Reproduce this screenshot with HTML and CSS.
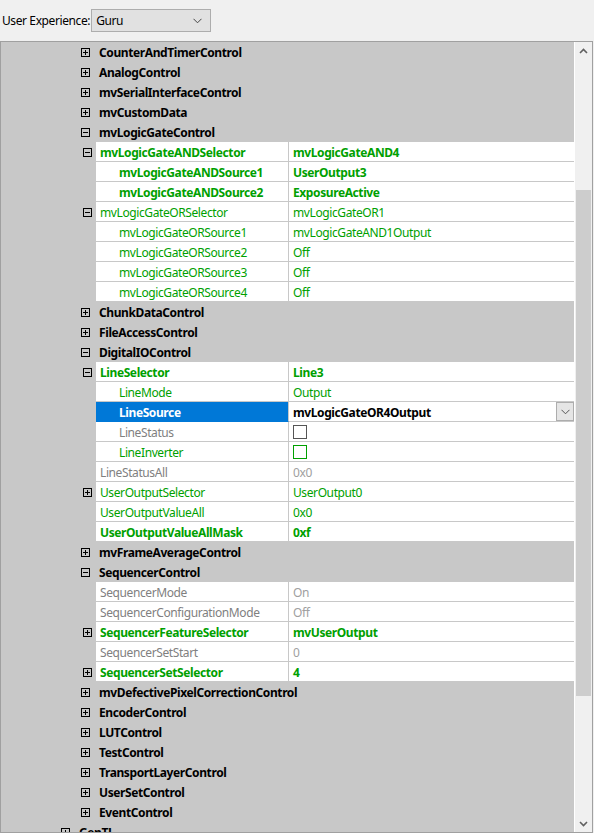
FILE: index.html
```html
<!DOCTYPE html>
<html lang="en">
<head>
    <meta charset="UTF-8">
    <meta name="viewport" content="width=device-width, initial-scale=1.0">
    <title>Property Grid</title>
    <link rel="stylesheet" href="styles.css">
</head>
<body>
    <div class="toolbar">
        <span class="toolbar-label">User Experience:</span>
        <div class="combo">
            <span>Guru</span>
            <svg class="combo-arrow" width="9" height="6" viewBox="0 0 9 6"><path d="M0.5 0.8 L4.5 4.8 L8.5 0.8" fill="none" stroke="#444" stroke-width="1"/></svg>
        </div>
    </div>

    <div class="tree-panel">
        <div class="tree">
            <div class="row group"><span class="exp plus"></span><span class="label">CounterAndTimerControl</span></div>
            <div class="row group"><span class="exp plus"></span><span class="label">AnalogControl</span></div>
            <div class="row group"><span class="exp plus"></span><span class="label">mvSerialInterfaceControl</span></div>
            <div class="row group"><span class="exp plus"></span><span class="label">mvCustomData</span></div>
            <div class="row group"><span class="exp"></span><span class="label">mvLogicGateControl</span></div>

            <div class="row prop green strong"><div class="gutter"><span class="exp"></span></div><div class="name">mvLogicGateANDSelector</div><div class="value">mvLogicGateAND4</div></div>
            <div class="row prop green strong"><div class="gutter"></div><div class="name sub">mvLogicGateANDSource1</div><div class="value">UserOutput3</div></div>
            <div class="row prop green strong"><div class="gutter"></div><div class="name sub">mvLogicGateANDSource2</div><div class="value">ExposureActive</div></div>
            <div class="row prop green"><div class="gutter"><span class="exp"></span></div><div class="name">mvLogicGateORSelector</div><div class="value">mvLogicGateOR1</div></div>
            <div class="row prop green"><div class="gutter"></div><div class="name sub">mvLogicGateORSource1</div><div class="value">mvLogicGateAND1Output</div></div>
            <div class="row prop green"><div class="gutter"></div><div class="name sub">mvLogicGateORSource2</div><div class="value">Off</div></div>
            <div class="row prop green"><div class="gutter"></div><div class="name sub">mvLogicGateORSource3</div><div class="value">Off</div></div>
            <div class="row prop green"><div class="gutter"></div><div class="name sub">mvLogicGateORSource4</div><div class="value">Off</div></div>

            <div class="row group"><span class="exp plus"></span><span class="label">ChunkDataControl</span></div>
            <div class="row group"><span class="exp plus"></span><span class="label">FileAccessControl</span></div>
            <div class="row group"><span class="exp"></span><span class="label">DigitalIOControl</span></div>

            <div class="row prop green strong"><div class="gutter"><span class="exp"></span></div><div class="name">LineSelector</div><div class="value">Line3</div></div>
            <div class="row prop green"><div class="gutter"></div><div class="name sub">LineMode</div><div class="value">Output</div></div>
            <div class="row prop selected"><div class="gutter"></div><div class="name sub">LineSource</div><div class="value">mvLogicGateOR4Output<span class="drop-btn"><svg width="9" height="6" viewBox="0 0 9 6"><path d="M0.5 0.8 L4.5 4.8 L8.5 0.8" fill="none" stroke="#555" stroke-width="1"/></svg></span></div></div>
            <div class="row prop readonly"><div class="gutter"></div><div class="name sub">LineStatus</div><div class="value"><span class="check"></span></div></div>
            <div class="row prop green"><div class="gutter"></div><div class="name sub">LineInverter</div><div class="value"><span class="check check-green"></span></div></div>
            <div class="row prop readonly"><div class="gutter"></div><div class="name">LineStatusAll</div><div class="value">0x0</div></div>
            <div class="row prop green"><div class="gutter"><span class="exp plus"></span></div><div class="name">UserOutputSelector</div><div class="value">UserOutput0</div></div>
            <div class="row prop green"><div class="gutter"></div><div class="name">UserOutputValueAll</div><div class="value">0x0</div></div>
            <div class="row prop green strong"><div class="gutter"></div><div class="name">UserOutputValueAllMask</div><div class="value">0xf</div></div>

            <div class="row group"><span class="exp plus"></span><span class="label">mvFrameAverageControl</span></div>
            <div class="row group"><span class="exp"></span><span class="label">SequencerControl</span></div>

            <div class="row prop readonly"><div class="gutter"></div><div class="name">SequencerMode</div><div class="value">On</div></div>
            <div class="row prop readonly"><div class="gutter"></div><div class="name">SequencerConfigurationMode</div><div class="value">Off</div></div>
            <div class="row prop green strong"><div class="gutter"><span class="exp plus"></span></div><div class="name">SequencerFeatureSelector</div><div class="value">mvUserOutput</div></div>
            <div class="row prop readonly"><div class="gutter"></div><div class="name">SequencerSetStart</div><div class="value">0</div></div>
            <div class="row prop green strong"><div class="gutter"><span class="exp plus"></span></div><div class="name">SequencerSetSelector</div><div class="value">4</div></div>

            <div class="row group"><span class="exp plus"></span><span class="label">mvDefectivePixelCorrectionControl</span></div>
            <div class="row group"><span class="exp plus"></span><span class="label">EncoderControl</span></div>
            <div class="row group"><span class="exp plus"></span><span class="label">LUTControl</span></div>
            <div class="row group"><span class="exp plus"></span><span class="label">TestControl</span></div>
            <div class="row group"><span class="exp plus"></span><span class="label">TransportLayerControl</span></div>
            <div class="row group"><span class="exp plus"></span><span class="label">UserSetControl</span></div>
            <div class="row group"><span class="exp plus"></span><span class="label">EventControl</span></div>
            <div class="row group top-level"><span class="exp plus"></span><span class="label">GenTL</span></div>
        </div>

        <div class="scrollbar">
            <div class="scroll-btn"><svg width="9" height="6" viewBox="0 0 9 6"><path d="M1 5 L4.5 1.5 L8 5" fill="none" stroke="#606060" stroke-width="1.6"/></svg></div>
            <div class="scroll-track"><div class="scroll-thumb"></div></div>
            <div class="scroll-btn"><svg width="9" height="6" viewBox="0 0 9 6"><path d="M1 1 L4.5 4.5 L8 1" fill="none" stroke="#606060" stroke-width="1.6"/></svg></div>
        </div>
    </div>
</body>
</html>
```

FILE: styles.css
```css
body {
    font-family: "Noto Sans", "Open Sans", Arial, sans-serif;
    font-size: 12px;
    letter-spacing: -0.4px;
    margin: 0;
    padding: 0;
    background: #f0f0f0;
    color: #000;
    width: 594px;
    height: 833px;
    overflow: hidden;
}
.toolbar {
    height: 41px;
    display: flex;
    align-items: center;
    padding-left: 2px;
    box-sizing: border-box;
}
.toolbar-label {
    margin-right: 1px;
}
.combo {
    width: 120px;
    height: 23px;
    box-sizing: border-box;
    border: 1px solid #adadad;
    background: #e1e1e1;
    display: flex;
    align-items: center;
    justify-content: space-between;
    padding: 0 8px 0 4px;
}
.tree-panel {
    width: 593px;
    height: 792px;
    box-sizing: border-box;
    border: 1px solid #a0a0a0;
    display: flex;
    background: #c8c8c8;
}
.tree {
    width: 573px;
    overflow: hidden;
}
.row {
    height: 20px;
    display: flex;
    align-items: center;
    box-sizing: border-box;
    white-space: nowrap;
}
.group {
    padding-left: 80px;
    font-weight: bold;
}
.group.top-level {
    padding-left: 60px;
}
.group .label {
    margin-left: 9px;
}
.exp {
    width: 9px;
    height: 9px;
    box-sizing: border-box;
    border: 1px solid #000;
    position: relative;
    flex: none;
}
.exp::before {
    content: "";
    position: absolute;
    left: 1px;
    right: 1px;
    top: 3px;
    height: 1px;
    background: #000;
}
.exp.plus::after {
    content: "";
    position: absolute;
    top: 1px;
    bottom: 1px;
    left: 3px;
    width: 1px;
    background: #000;
}
.prop {
    align-items: stretch;
}
.gutter {
    width: 95px;
    padding-left: 82px;
    box-sizing: border-box;
    display: flex;
    align-items: center;
    flex: none;
}
.name,
.value {
    background: #fff;
    border-bottom: 1px solid #c8c8c8;
    display: flex;
    align-items: center;
    box-sizing: border-box;
    padding-top: 1px;
}
.name {
    width: 193px;
    border-right: 1px solid #c8c8c8;
    padding-left: 4px;
    flex: none;
}
.name.sub {
    padding-left: 23px;
}
.value {
    flex: 1;
    padding-left: 4px;
}
.green .name,
.green .value {
    color: #00a000;
}
.strong .name,
.strong .value {
    font-weight: bold;
}
.readonly .name {
    color: #808080;
}
.readonly .value {
    color: #a0a0a0;
}
.selected .name {
    background: #0078d7;
    color: #fff;
    font-weight: bold;
    border-bottom-color: #0078d7;
}
.selected .value {
    font-weight: bold;
    color: #000;
}
.drop-btn {
    margin-left: auto;
    width: 18px;
    height: 19px;
    box-sizing: border-box;
    border: 1px solid #adadad;
    background: #e5e5e5;
    display: flex;
    align-items: center;
    justify-content: center;
    align-self: flex-start;
    margin-top: -1px;
}
.check {
    width: 14px;
    height: 14px;
    box-sizing: border-box;
    border: 1px solid #555;
    background: #fff;
}
.check-green {
    border-color: #00a000;
}
.scrollbar {
    width: 18px;
    border-left: 1px solid #fff;
    box-sizing: border-box;
    background: #f0f0f0;
    display: flex;
    flex-direction: column;
}
.scroll-btn {
    height: 17px;
    display: flex;
    align-items: center;
    justify-content: center;
    flex: none;
}
.scroll-track {
    flex: 1;
    padding: 0 1px;
}
.scroll-thumb {
    margin-top: 131px;
    height: 506px;
    background: #cdcdcd;
}
```
